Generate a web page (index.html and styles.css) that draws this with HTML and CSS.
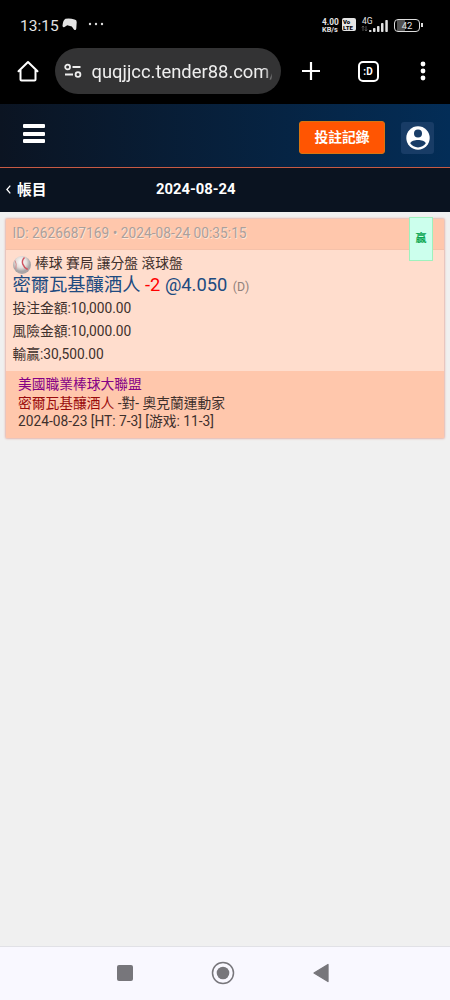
FILE: index.html
```html
<!DOCTYPE html>
<html lang="zh-Hant">
<head>
<meta charset="utf-8">
<meta name="viewport" content="width=device-width, initial-scale=1">
<title>帳目</title>
<link rel="stylesheet" href="styles.css">
</head>
<body>
<div class="screen">
  <div class="status">
    <span class="clock">13:15</span>
    <svg class="game" width="16" height="13" viewBox="0 0 16 13"><path d="M3.500.8Q8 0 12.500 1.500q2.300.5 2.200 2.400l-.4 6.600q-.2 2.200-2.200 1.300L9.800 8.600 5.200 7.200 2.500 9Q.6 9.800.5 7.800 1 2 3.500.8Z" fill="#e4e4e4"/></svg>
    <svg class="dots" width="16" height="4" viewBox="0 0 16 4" fill="#ddd"><circle cx="2" cy="2" r="1.200"/><circle cx="8" cy="2" r="1.200"/><circle cx="14" cy="2" r="1.200"/></svg>
    <div class="speed"><span class="rate">4.00</span><span>KB/s</span></div>
    <div class="volte"><span>Vo</span><span>LTE</span></div>
    <div class="signal">
      <span>4G</span>
      <svg width="28" height="15" viewBox="0 0 28 15"><path d="M2 8v5M.8 9.500 2 8l1.200 1.500M5 8v5m-1.200-1.500L5 13l1.200-1.500" stroke="#666" stroke-width=".8" fill="none"/><g fill="#e2e2e2"><rect x="8" y="12" width="2.500" height="2" rx=".8"/><rect x="12" y="10" width="2.500" height="4" rx=".8"/><rect x="16" y="8" width="2.500" height="6" rx=".8"/><rect x="20" y="5" width="2.500" height="9" rx=".8"/><rect x="24.300" y="2" width="2.500" height="12" rx=".8"/></g></svg>
    </div>
    <div class="battery"><span>42</span></div>
    <i class="battery-tip"></i>
  </div>

  <div class="browser">
    <svg class="home" width="22" height="22" viewBox="0 0 22 22" fill="none" stroke="#fff" stroke-width="2" stroke-linejoin="round" stroke-linecap="round"><path d="M1.500 11.300 11 2l9.500 9.300M3.500 10v9.500q0 1 1 1h13q1 0 1-1V10"/></svg>
    <div class="address">
      <svg width="18" height="16" viewBox="0 0 18 16" fill="none" stroke="#eee" stroke-width="1.800"><circle cx="3.600" cy="4" r="2.400"/><path d="M8.500 4h8M1 11.500h8"/><circle cx="14" cy="11.500" r="2.400"/></svg>
      <span class="url">quqjjcc.tender88.com/</span>
    </div>
    <svg class="plus" width="20" height="20" viewBox="0 0 20 20" stroke="#fff" stroke-width="2.200"><path d="M10 1v18M1 10h18"/></svg>
    <div class="tabs">:D</div>
    <svg class="more" width="6" height="20" viewBox="0 0 6 20" fill="#fff"><circle cx="3" cy="3" r="2.400"/><circle cx="3" cy="10" r="2.400"/><circle cx="3" cy="17" r="2.400"/></svg>
  </div>

  <header class="header">
    <div class="menu"><i></i><i></i><i></i></div>
    <div class="records">投註記錄</div>
    <div class="account"><svg width="24" height="24" viewBox="0 0 24 24"><circle cx="12" cy="12" r="11.700" fill="#fff"/><circle cx="12" cy="7.500" r="4" fill="#183c66"/><path d="M4.200 17.300C6 12.900 18 12.900 19.800 17.300 16.300 22.800 7.700 22.800 4.200 17.300Z" fill="#183c66"/></svg></div>
  </header>
  <div class="rule"></div>

  <div class="titlebar">
    <svg width="5" height="9" viewBox="0 0 5 9" fill="none" stroke="#fff" stroke-width="1.300"><path d="M4.300.6.9 4.500l3.400 3.900"/></svg>
    <span class="back">帳目</span>
    <span class="date">2024-08-24</span>
  </div>

  <main class="content">
    <article class="card">
      <div class="card-head">ID: 2626687169 • 2024-08-24 00:35:15</div>
      <div class="result">贏</div>
      <div class="card-body">
        <div class="sport">
          <svg width="20" height="20" viewBox="0 0 20 20"><defs><radialGradient id="ball" cx="45%" cy="35%"><stop offset="0" stop-color="#fff"/><stop offset=".6" stop-color="#e5dfdc"/><stop offset="1" stop-color="#a9a5a6"/></radialGradient></defs><circle cx="10" cy="10" r="9" fill="url(#ball)"/><path d="M12.500 2.500q-3 3-1.800 6.500t5 5.500" fill="none" stroke="#cf5560" stroke-width="1.500"/><path d="M3 5.500q2 3 .8 8.500" fill="none" stroke="#d38a8c" stroke-width="1"/></svg>
          <span>棒球 賽局 讓分盤 滾球盤</span>
        </div>
        <div class="pick">密爾瓦基釀酒人 <span class="hcap">-2</span> @4.050 <small>(D)</small></div>
        <div class="line">投注金額:10,000.00</div>
        <div class="line">風險金額:10,000.00</div>
        <div class="line">輸贏:30,500.00</div>
      </div>
      <div class="card-foot">
        <div class="league">美國職業棒球大聯盟</div>
        <div><span class="team">密爾瓦基釀酒人</span> -對- 奧克蘭運動家</div>
        <div>2024-08-23 [HT: 7-3] [游戏: 11-3]</div>
      </div>
    </article>
  </main>

  <nav class="nav">
    <i class="recent"></i>
    <svg class="circle" width="24" height="24" viewBox="0 0 24 24"><circle cx="12" cy="12" r="10.500" fill="none" stroke="#77767b" stroke-width="1.500"/><circle cx="12" cy="12" r="6.300" fill="#77767b"/></svg>
    <svg width="16" height="20" viewBox="0 0 16 20"><path d="M1 10 15 1.500v17Z" fill="#77767b" stroke="#77767b" stroke-width="1.300" stroke-linejoin="round"/></svg>
  </nav>
</div>
</body>
</html>
```
FILE: styles.css
```css
* { box-sizing: border-box; }
body { margin: 0; font-family: Roboto, "Noto Sans CJK TC", sans-serif; background: #f0f0f0; }
svg { display: block; flex: none; }
.screen { width: 450px; height: 1000px; display: flex; flex-direction: column; overflow: hidden; }

.status { height: 48px; flex: none; display: flex; align-items: center; padding: 3px 0 0 20px; background: #000; color: #e4e4e4; }
.clock { width: 42px; font-size: 15.5px; }
.game { margin-top: -2px; }
.dots { margin: -3px 0 0 10px; }
.speed { width: 18px; margin-left: 218px; display: flex; flex-direction: column; font-size: 7.3px; line-height: 8px; font-weight: 700; white-space: nowrap; }
.rate { font-size: 8.3px; }
.volte { width: 14px; height: 13px; margin: -2px 0 0 2px; padding: 1px 0 0 1px; border-radius: 2px; background: #e4e4e4; color: #000; display: flex; flex-direction: column; font-size: 6px; line-height: 5.5px; font-weight: 900; }
.signal { position: relative; width: 28px; margin: -1px 0 0 5px; }
.signal span { position: absolute; left: 1px; top: -1px; font-size: 8.5px; line-height: 9px; }
.battery { width: 26px; height: 13px; margin: -1px 0 0 5px; border: 1.5px solid #ddd; border-radius: 4px; background: linear-gradient(90deg, #000 2px, #505050 2px, #505050 10px, #000 10px); display: flex; align-items: center; justify-content: center; font-size: 9.5px; }
.battery-tip { width: 1.5px; height: 4px; margin: -1px 0 0 1px; background: #ddd; }

.browser { height: 56px; flex: none; display: flex; align-items: center; padding: 0 0 10px 16.5px; background: #000; }
.address { width: 226px; height: 46px; margin-left: 16px; padding-left: 9px; border-radius: 23px; background: #333334; display: flex; align-items: center; }
.url { width: 180px; margin: 2px 0 0 10px; overflow: hidden; white-space: nowrap; font-size: 18.4px; line-height: 26px; color: #eee; -webkit-mask-image: linear-gradient(90deg, #000 172px, transparent 182px); mask-image: linear-gradient(90deg, #000 172px, transparent 182px); }
.plus { margin-left: 20px; }
.tabs { width: 21px; height: 21px; margin-left: 37px; border: 2px solid #fff; border-radius: 5px; color: #fff; display: flex; align-items: center; justify-content: center; font-size: 10px; font-weight: 700; }
.more { margin-left: 41px; }

.header { height: 63px; flex: none; display: flex; align-items: center; padding: 4px 16px 0 23px; background: linear-gradient(90deg, #0b1422, #032d57); }
.rule { height: 1px; flex: none; background: #c85a44; }
.menu { width: 22px; height: 19px; margin-top: -8px; display: flex; flex-direction: column; justify-content: space-between; }
.menu i { height: 4px; border-radius: 1px; background: #fff; }
.records { width: 86px; height: 33px; margin: 0 16px 0 auto; border: 1px solid #d77510; border-radius: 3px; background: #ff5502; color: #fff; font-size: 13.8px; line-height: 30px; font-weight: 700; text-align: center; }
.account { width: 33px; height: 32px; border-radius: 3px; background: #183c66; display: flex; align-items: center; justify-content: center; }

.titlebar { height: 44px; flex: none; display: flex; align-items: center; padding: 0 0 2px 6px; background: #0a1320; color: #fff; font-size: 14.8px; font-weight: 700; }
.back { width: 139px; margin: -1px 0 0 6px; }

.content { flex: 1; padding: 7px 6px; background: #f0f0f0; }
.card { position: relative; height: 219px; display: flex; flex-direction: column; background: #ffddcd; box-shadow: 0 0 2px 1px #e4b8b0; color: #3e302c; font-size: 13.75px; border-radius: 1px; }
.card-head { height: 31px; flex: none; padding-left: 6.5px; border-bottom: 1px solid #f5c1a9; background: #ffc7ac; color: #aaa09b; line-height: 29px; text-shadow: 1px 1px 0 #ffe4d6; }
.result { position: absolute; left: 403px; top: -2px; width: 24px; height: 44px; border: 1px solid #9ff1bd; background: #ccffed; color: #08a650; font-size: 11px; font-weight: 700; line-height: 42px; text-align: center; }
.card-body { height: 121px; flex: none; padding: 3px 0 0 6.5px; }
.sport { height: 20px; display: flex; align-items: center; gap: 3px; margin-left: -1px; }
.sport svg { margin-top: 3px; }
.sport span { margin: -2px 0 0 .5px; }
.pick { height: 23px; color: #204a80; font-size: 18.3px; line-height: 23px; white-space: nowrap; }
.pick small { margin-left: 1px; color: #90817c; font-size: 12.3px; }
.hcap { color: #f00; }
.line { height: 23px; line-height: 24px; }
.card-foot { flex: 1; padding: 4px 0 0 12px; background: #ffc7ac; line-height: 18.5px; }
.card-foot div { height: 18.5px; }
.league { color: #850085; }
.team { color: #990b0b; }

.nav { height: 54px; flex: none; display: flex; align-items: center; padding: 0 0 2px 117px; border-top: 1px solid #e1e1e6; background: #f9f8ff; }
.recent { width: 16px; height: 16px; border-radius: 2px; background: #77767b; }
.circle { margin: 0 77.500px 0 78px; }
```
